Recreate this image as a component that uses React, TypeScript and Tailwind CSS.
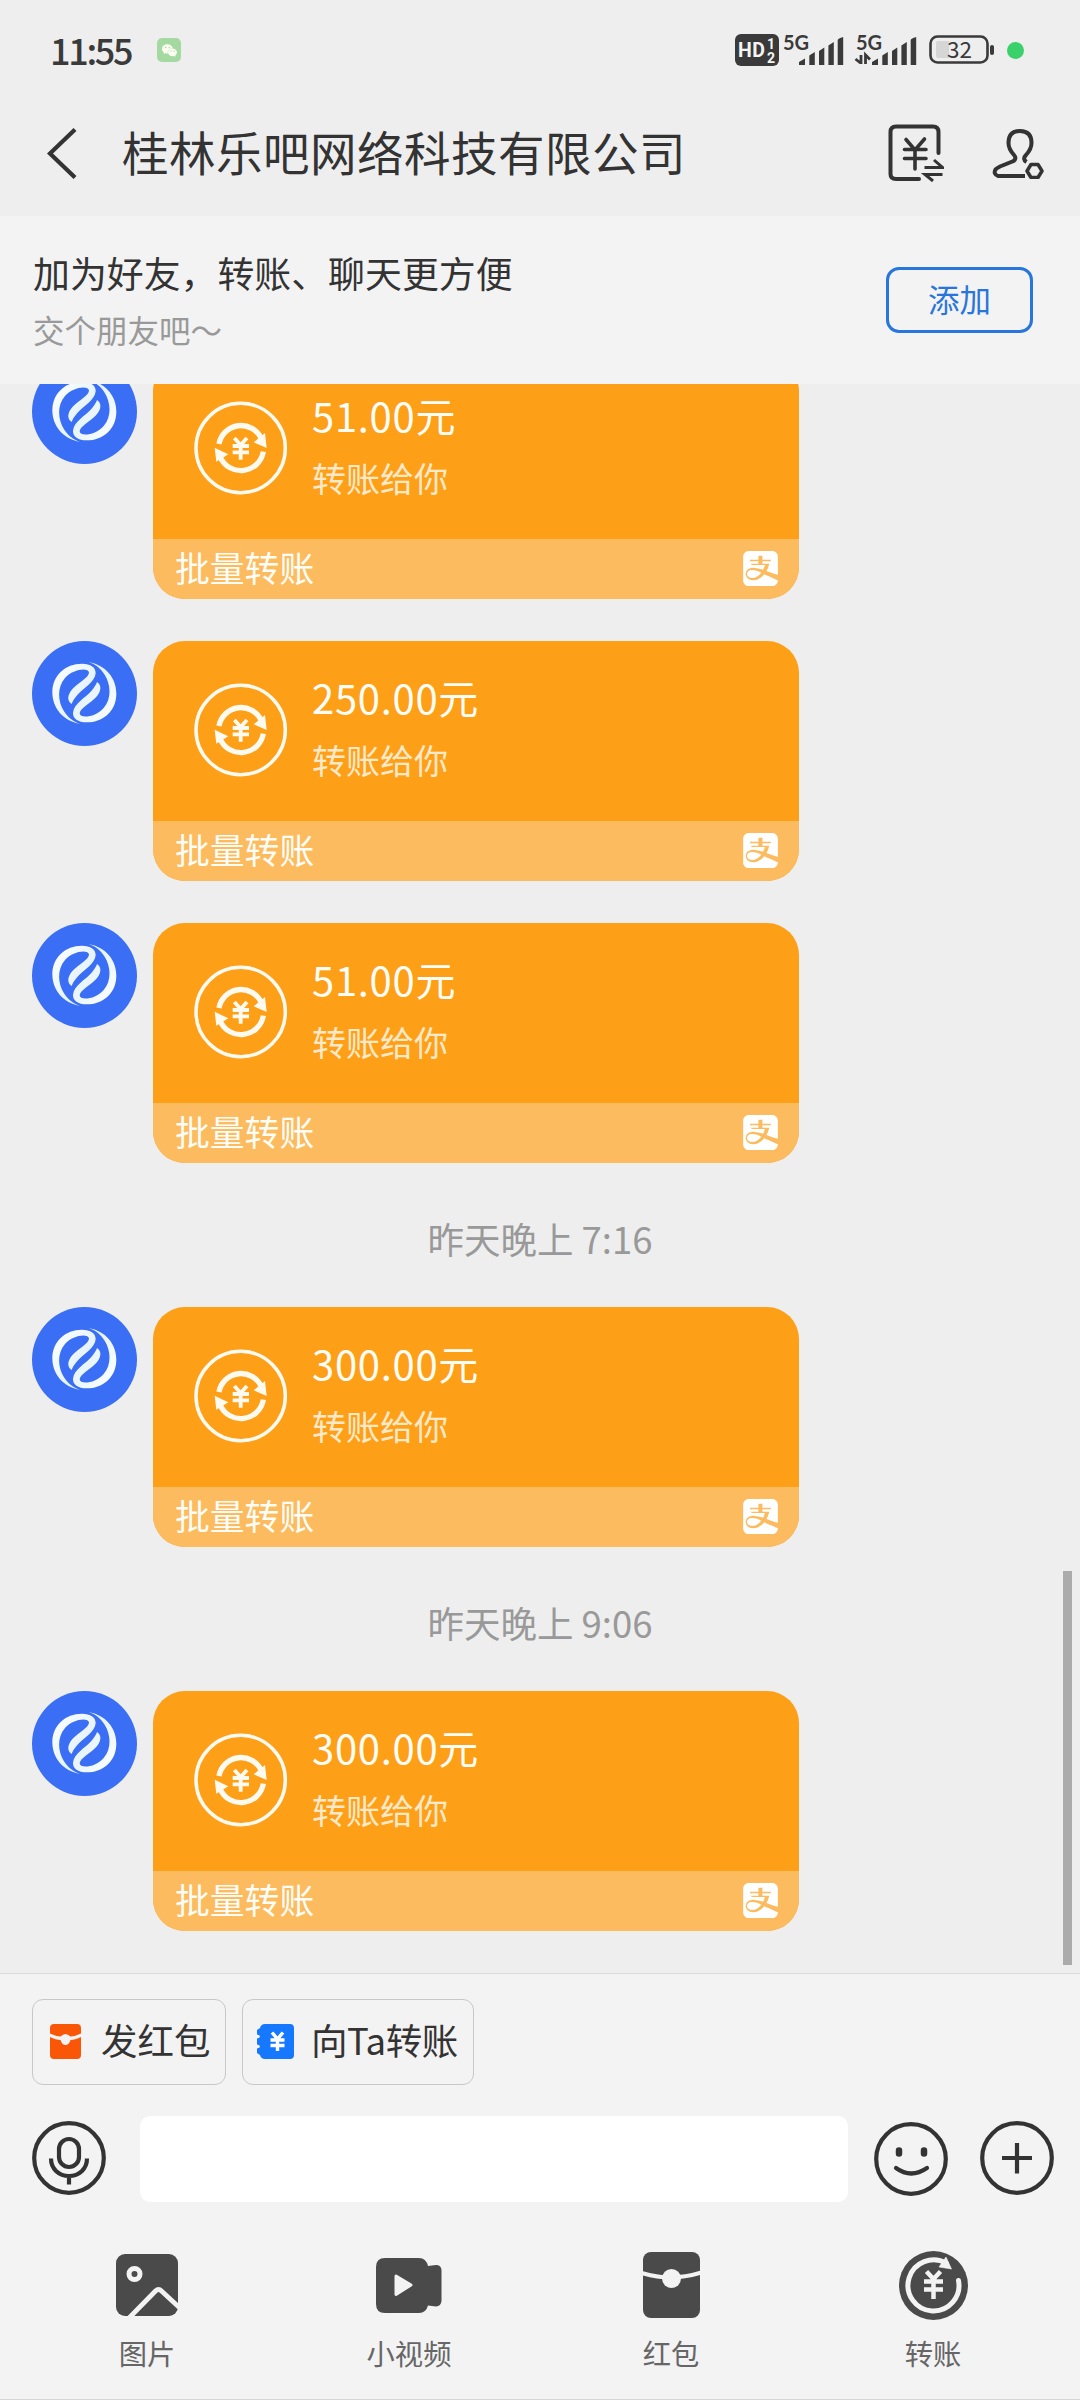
import React from "react";
import { SiAlipay, SiWechat } from "react-icons/si";

const INK = "#333333";

function StatusBar() {
  return (
    <div className="flex h-[100px] items-center pl-[50px] pr-[56px]">
      <span className="-mt-[2px] w-[86px] whitespace-nowrap text-[36px] font-medium leading-[40px] tracking-[-2.3px] text-[#3a3a3a] font-['Noto_Sans_CJK_SC','Noto_Sans',sans-serif]">11:55</span>
      <span className="ml-[21px] flex size-[24px] items-center justify-center rounded-[5px] bg-[#a5d9a2]">
        <SiWechat className="size-[15px] text-[#fbfff0]" />
      </span>
      <div className="ml-auto flex items-center">
        <svg width="44" height="32" viewBox="0 0 44 32" className="mr-[2px]" fontFamily="Roboto, sans-serif" fontWeight="700">
          <rect width="44" height="32" rx="6" fill="#3a3a3a" />
          <text x="3" y="23" fontSize="19.5" fill="#f4f4f4" textLength="27">HD</text>
          <text x="32" y="15" fontSize="14" fill="#f4f4f4">1</text>
          <text x="32" y="28.5" fontSize="14" fill="#f4f4f4">2</text>
        </svg>
        <Signal />
        <Signal data />
        <svg width="66" height="42" viewBox="0 -6 66 42" className="ml-[12px] mr-[12px]">
          <rect x="1.5" y="1.5" width="57" height="26" rx="7" fill="none" stroke="#3a3a3a" strokeWidth="2.6" />
          <path d="M9 6H20V23H9Q7 23 7 21V8Q7 6 9 6Z" fill="#d6d6d6" />
          <path d="M63 12V18" stroke="#3a3a3a" strokeWidth="4" strokeLinecap="round" />
          <text x="30.5" y="22.5" textAnchor="middle" fontFamily="Noto Sans CJK SC, sans-serif" fontSize="22.5" fill="#3a3a3a">32</text>
        </svg>
        <span className="size-[17px] rounded-full bg-[#3bd16a]" />
      </div>
    </div>
  );
}

function Signal({ data = false }: { data?: boolean }) {
  return (
    <svg width="63" height="44" viewBox="-3 -6 63 44" className={data ? "ml-[10px]" : ""}>
      <text x="-1" y="15.5" fontFamily="Lato, sans-serif" fontWeight="700" fontSize="20" fill="#3a3a3a" textLength="26">5G</text>
      <g fill="#3a3a3a">
        <path d="M15 31V28L21 24.5V31Z" />
        <path d="M25.3 31V21.5L30.8 18V31Z" />
        <path d="M35 31V17L40.3 13.5V31Z" />
        <path d="M44.4 31V11.5L49.8 8V31Z" />
        <path d="M53.7 31V6Q54 4.5 59.2 3V31Z" />
      </g>
      {data && (
        <path d="M4 21V30M-1.500 25L3.500 29M8.500 30V21L13 25.500" stroke="#3a3a3a" strokeWidth="2.8" fill="none" />
      )}
    </svg>
  );
}

function Header() {
  return (
    <div className="flex h-[116px] items-center pb-[10px] pl-[46px] pr-[36px]">
      <svg width="31" height="51" viewBox="0 0 31 51" fill="none" stroke={INK} strokeWidth="4.2">
        <path d="M29 1.5L4 25.5L29 49.5" />
      </svg>
      <h1 className="ml-[45px] whitespace-nowrap text-[46.5px] leading-[60px] tracking-[0.5px] text-[#333] -mt-[4px]">桂林乐吧网络科技有限公司</h1>
      <svg width="56" height="58" viewBox="0 0 56 58" fill="none" stroke={INK} strokeWidth="4" className="ml-auto mr-[48px]">
        <path d="M50.5 29V8Q50.5 2.500 45 2.500H8Q2.500 2.500 2.500 8V50Q2.500 55 8 55H31" strokeLinecap="round" />
        <path d="M18 15.500L27 26L36.500 15M16.500 25.500H38M16.500 34.500H38M27 25V45" strokeLinecap="round" strokeWidth="3.600" />
        <path d="M36.500 43.500H54.500L46 36M54.500 50.500H37L45 57" strokeWidth="3" />
      </svg>
      <svg width="52" height="51" viewBox="0 0 52 51" fill="none" stroke={INK} strokeWidth="4">
        <path d="M33 48H6Q1 46 3.500 41.500Q5 40 8 38.500L21.500 33Q25 30.500 22 27Q16.500 21 16.500 15Q16.500 3 28 3Q39.500 3 39.500 15Q39.500 21 34 27Q30 31 34.500 34" />
        <path d="M39 36.500H46L50 43L46 49.500H39L35 43Z" strokeWidth="3.500" strokeLinejoin="round" />
      </svg>
    </div>
  );
}

function FriendBanner() {
  return (
    <div className="flex h-[168px] items-center justify-between bg-[#f3f3f3] pl-[33px] pr-[47px]">
      <div className="pb-[4px]">
        <p className="text-[36.9px] leading-[54px] text-[#333]">加为好友，转账、聊天更方便</p>
        <p className="mt-[7px] text-[31.5px] leading-[46px] text-[#999]">交个朋友吧～</p>
      </div>
      <button className="mb-0 flex h-[66px] w-[147px] items-center justify-center rounded-[13px] border-[3px] border-[#2875dc] pb-[3px] text-[31.5px] leading-none text-[#2875dc]">
        添加
      </button>
    </div>
  );
}

/* Half of the two-ribbon emblem; the other half is the same shape turned by 180 degrees. */
const RIBBON =
  "M240 312C190 303 157 265 157 217C157 166 196 131 246 131C272 131 288 143 287 160C285 187 247 207 232 225C222 237 217 245 215 252C201 243 201 225 218 206C236 187 266 173 267 158C266 141 219 146 195 174C170 203 174 245 192 274C204 293 220 305 240 312Z";

function Avatar() {
  return (
    <svg viewBox="96 63 315 315" className="size-[105px] shrink-0">
      <defs>
        <linearGradient id="ribbon" x1="0" y1="0" x2="1" y2="1">
          <stop offset="0" stopColor="#ffffff" />
          <stop offset="1" stopColor="#d5ecf7" />
        </linearGradient>
      </defs>
      <circle cx="253.500" cy="220.500" r="157.500" fill="#3a6ef5" />
      <path d={RIBBON} fill="url(#ribbon)" />
      <path d={RIBBON} fill="url(#ribbon)" transform="rotate(180 253 219)" />
    </svg>
  );
}

function TransferMark() {
  return (
    <svg viewBox="581 190 282 282" className="size-[94px] shrink-0" fill="none" stroke="#fffaf0">
      <circle cx="721" cy="331" r="134" strokeWidth="10.500" />
      <path d="M656 319A67 67 0 0 1 783 303" strokeWidth="16" />
      <path d="M789 342A68 68 0 0 1 660 359" strokeWidth="16" />
      <path d="M794 286L799 331L760 314Z M648 372L643 330L684 350Z" fill="#fffaf0" stroke="none" />
      <path d="M702 301L721 322L740 301M697 325H746M697 344H746M721 322V366" strokeWidth="11.500" />
    </svg>
  );
}

function Transfer({ amount }: { amount: string }) {
  return (
    <div className="flex h-[240px] shrink-0 gap-[16px] pl-[32px]">
      <Avatar />
      <div className="flex h-[240px] w-[646px] flex-col overflow-hidden rounded-[32px] bg-[#fe9f18]">
        <div className="flex h-[180px] pl-[41px] pt-[42px]">
          <TransferMark />
          <div className="ml-[24px] -mt-[16px]">
            <p className="text-[40px] leading-[60px] tracking-[0.7px] text-[#fffdf6]">{amount}元</p>
            <p className="mt-[8px] text-[34px] leading-[50px] text-[#ffe9c9]">转账给你</p>
          </div>
        </div>
        <div className="flex h-[60px] items-center justify-between bg-[#fcbb5e] pl-[22px] pr-[21px]">
          <span className="-mt-[5px] text-[34.8px] leading-[50px] text-[#fffdf6]">批量转账</span>
          <SiAlipay className="-mt-px size-[35px] text-white" />
        </div>
      </div>
    </div>
  );
}

function TimeLabel({ children }: { children: React.ReactNode }) {
  return (
    <div className="flex h-[144px] shrink-0 items-center justify-center pt-[8px] text-[36.5px] leading-[50px] text-[#999]">
      {children}
    </div>
  );
}

function Chat() {
  return (
    <div className="relative flex h-[1589px] shrink-0 flex-col overflow-hidden bg-[#eeeeee]">
      <div className="-mt-[25px] flex flex-col gap-[42px]">
        <Transfer amount="51.00" />
        <Transfer amount="250.00" />
        <Transfer amount="51.00" />
      </div>
      <TimeLabel>昨天晚上 7:16</TimeLabel>
      <Transfer amount="300.00" />
      <TimeLabel>昨天晚上 9:06</TimeLabel>
      <Transfer amount="300.00" />
      <div className="absolute bottom-[8px] right-[8px] h-[394px] w-[9px] bg-[#ababab]" />
    </div>
  );
}

function QuickActions() {
  return (
    <div className="flex gap-[16px] pl-[32px] pt-[25px]">
      <button className="flex h-[86px] w-[194px] items-center rounded-[11px] border border-[#c8c8c8] pl-[17px] text-[36.5px] text-[#333]">
        <svg width="31" height="35" viewBox="0 0 31 35" fill="#fa5607" className="-mt-px">
          <path d="M4 0H27Q31 0 31 4V9.500Q26 12 20.500 12.500Q18 10 15.500 10Q13 10 10.500 12.500Q5 12 0 9.500V4Q0 0 4 0Z" />
          <path d="M0 13Q6 16 10.500 16Q12 21 15.500 21Q19 21 20.500 16Q25 16 31 13V31Q31 35 27 35H4Q0 35 0 31Z" />
        </svg>
        <span className="ml-[20px] -mt-[4px] whitespace-nowrap">发红包</span>
      </button>
      <button className="flex h-[86px] w-[232px] items-center rounded-[11px] border border-[#c8c8c8] pl-[14px] text-[36.5px] text-[#333]">
        <svg width="37" height="35" viewBox="0 0 37 35" className="-mt-px shrink-0">
          <path d="M8 0H33Q37 0 37 4V31Q37 35 33 35H8Q4 35 3 31L0 29V24.500Q3 24 3 22.500Q3 21 0 20.500V14.500Q3 14 3 12.500Q3 11 0 10.500V6L3 4Q4 0 8 0Z" fill="#1677ff" />
          <path d="M15 8.500L20.500 15L26 8.500M13.500 16H27.500M13.500 21.500H27.500M20.500 15V27" stroke="#fff" strokeWidth="3.400" fill="none" />
        </svg>
        <span className="ml-[17px] -mt-[4px] whitespace-nowrap tracking-[-0.4px]">向Ta转账</span>
      </button>
    </div>
  );
}

function InputRow() {
  return (
    <div className="flex items-center pl-[32px] pt-[31px]">
      <svg width="74" height="74" viewBox="0 0 74 74" fill="none" stroke={INK} strokeWidth="4.200" className="-mt-[2px]">
        <circle cx="37" cy="37" r="34.800" />
        <rect x="27" y="18" width="20" height="28" rx="10" />
        <path d="M19 37.500C19 48 27 55 37 55S55 48 55 37.500M37 55V63.500" />
      </svg>
      <div className="ml-[34px] h-[86px] w-[708px] rounded-[10px] bg-white" />
      <svg width="74" height="74" viewBox="0 0 74 74" fill="none" stroke={INK} strokeWidth="4.200" className="ml-[26px]">
        <circle cx="37" cy="37" r="34.800" />
        <path d="M25 28.500V31.500M50 28.500V31.500" strokeWidth="6.500" strokeLinecap="round" />
        <path d="M22 46Q37 57 53 46" strokeLinecap="round" />
      </svg>
      <svg width="74" height="74" viewBox="0 0 74 74" fill="none" stroke={INK} strokeWidth="4.200" className="-mt-[2px] ml-[32px]">
        <circle cx="37" cy="37" r="34.800" />
        <path d="M22 37H52M37 22V52.500" />
      </svg>
    </div>
  );
}

function Tool({ label, children }: { label: string; children: React.ReactNode }) {
  return (
    <div className="flex w-[262px] flex-col items-center">
      <div className="flex h-[70px] items-center">{children}</div>
      <span className="mt-[12px] text-[28.3px] leading-[42px] text-[#666]">{label}</span>
    </div>
  );
}

function Tools() {
  return (
    <div className="flex pl-[16px] pt-[48px]">
      <Tool label="图片">
        <svg width="62" height="62" viewBox="0 0 62 62" fill="none">
          <rect width="62" height="62" rx="9" fill="#4a4a4a" />
          <circle cx="18.500" cy="20" r="5.500" stroke="#f3f3f3" strokeWidth="5" />
          <path d="M13 64L39.500 37Q42.500 34 45.500 37L64 54" stroke="#f3f3f3" strokeWidth="4.800" />
        </svg>
      </Tool>
      <Tool label="小视频">
        <svg width="66" height="55" viewBox="0 0 66 55">
          <path d="M9 0H43Q50 0 52 8L60 7Q65 7 65.500 12V43Q65 48 60 48.500L52 47.500Q50 55 43 55H9Q0 55 0 46V9Q0 0 9 0Z" fill="#4a4a4a" />
          <path d="M20 18L35 27L20 36.500Z" fill="#f3f3f3" stroke="#f3f3f3" strokeWidth="3" strokeLinejoin="round" />
        </svg>
      </Tool>
      <Tool label="红包">
        <svg width="57" height="66" viewBox="0 0 57 66" className="-mt-px">
          <rect width="57" height="66" rx="8" fill="#4a4a4a" />
          <path d="M-1 21Q28 30 58 20.500" fill="none" stroke="#f3f3f3" strokeWidth="4" />
          <circle cx="28.500" cy="26.500" r="9.500" fill="#f3f3f3" />
        </svg>
      </Tool>
      <Tool label="转账">
        <svg width="69" height="69" viewBox="0 0 69 69" fill="none" stroke="#f3f3f3">
          <circle cx="34.500" cy="34.500" r="34.500" fill="#4a4a4a" stroke="none" />
          <path d="M59.500 29.500A25.500 25.500 0 1 1 47.500 12.500" strokeWidth="5" strokeLinecap="round" />
          <path d="M47 6L52.500 18L40 16Z" fill="#f3f3f3" strokeWidth="0.600" />
          <path d="M27.500 20.500L34.500 28L41.500 20.500M25 30.500H44M25 38.500H44M34.500 28V48" strokeWidth="4.500" />
        </svg>
      </Tool>
    </div>
  );
}

export default function App() {
  return (
    <div className="flex h-[2400px] w-[1080px] flex-col overflow-hidden bg-[#eeeeee] font-['Noto_Sans_CJK_SC',sans-serif]">
      <StatusBar />
      <Header />
      <FriendBanner />
      <Chat />
      <div className="flex h-[427px] flex-col border-y border-t-[#dadada] border-b-[#d6d6d6] bg-[#f3f3f3]">
        <QuickActions />
        <InputRow />
        <Tools />
      </div>
    </div>
  );
}
